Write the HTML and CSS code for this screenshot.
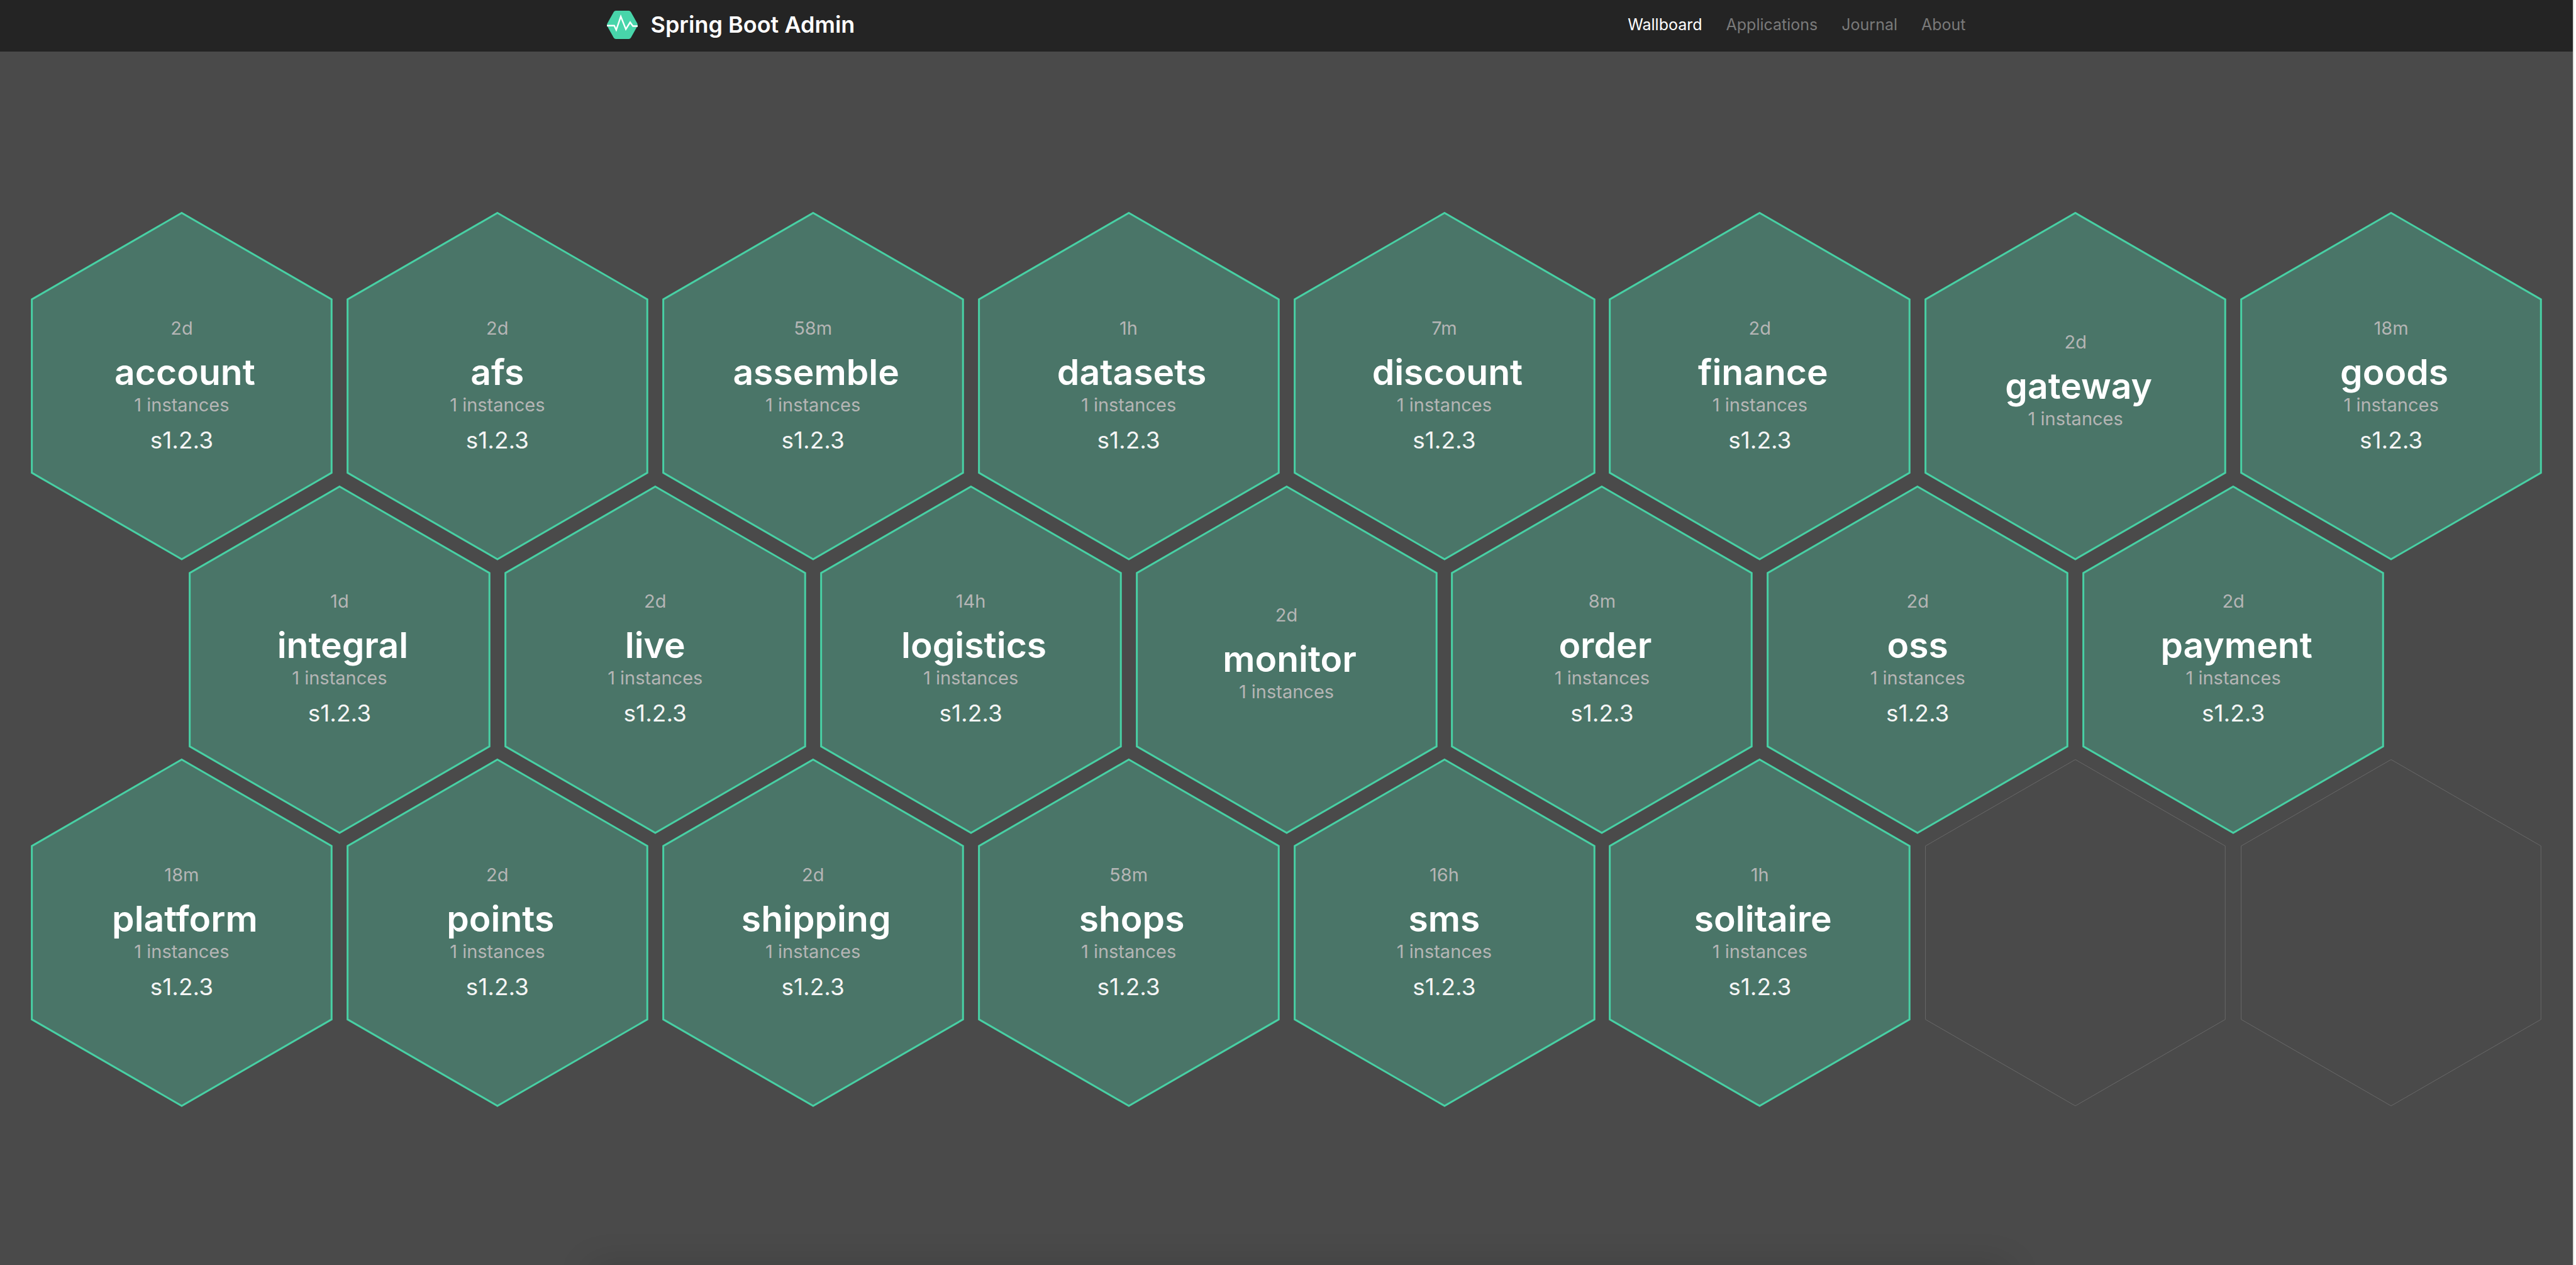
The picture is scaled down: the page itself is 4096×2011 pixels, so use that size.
FILE: index.html
```html
<!DOCTYPE html>
<html lang="en">
<head>
<meta charset="utf-8">
<title>Spring Boot Admin</title>
<link rel="stylesheet" href="styles.css">
</head>
<body>
<div class="app">
  <header class="navbar">
    <div class="navbar-inner">
      <a class="brand" href="#">
        <svg class="brand-logo" viewBox="0 0 61 56" aria-hidden="true">
          <path class="logo-shape" d="M18 0H43Q46 0 47.500 2.500L60 25Q61.500 28 60 31L47.500 53.500Q46 56 43 56H18Q15 56 13.500 53.500L1 31Q-0.500 28 1 25L13.500 2.500Q15 0 18 0Z"/>
          <path class="logo-pulse" d="M0 29.500H14.500L18.500 38L27.500 11.500L37.500 36.500L46 23L51.500 30.500H61"/>
        </svg>
        <span>Spring Boot Admin</span>
      </a>
      <nav class="menu">
        <a class="menu-link is-active" href="#">Wallboard</a>
        <a class="menu-link" href="#">Applications</a>
        <a class="menu-link" href="#">Journal</a>
        <a class="menu-link" href="#">About</a>
      </nav>
    </div>
  </header>
  <main class="wallboard" id="wallboard"></main>
</div>
<script src="wallboard.js"></script>
</body>
</html>
```
FILE: styles.css
```css
* {
  box-sizing: border-box;
}

body {
  margin: 0;
  background: #fff;
  font-family: Inter, "Liberation Sans", sans-serif;
}

.app {
  position: relative;
  display: flex;
  flex-direction: column;
  min-height: 100vh;
  margin-right: 3px;
  border-right: 2px solid #e6e4e2;
  background: #4a4a4a;
  overflow: hidden;
}

/* soft shadow rising from the bottom edge */
.app::after {
  content: "";
  position: absolute;
  top: 100%;
  right: 22%;
  left: 23%;
  height: 40px;
  box-shadow: 0 4px 56px rgba(0, 0, 0, 0.17);
}

.navbar {
  background: #242424;
}

.navbar-inner {
  display: flex;
  align-items: center;
  justify-content: space-between;
  width: 52.8%;
  height: 82px;
  margin: 0 auto;
}

.brand {
  display: flex;
  align-items: center;
  gap: 20px;
  padding-bottom: 4px;
  color: #fff;
  font-size: 36px;
  font-weight: 600;
  line-height: 48px;
  text-decoration: none;
}

.brand-logo {
  width: 49px;
  height: 45px;
}

.logo-shape {
  fill: #48d5aa;
}

.logo-pulse {
  fill: none;
  stroke: #fff;
  stroke-width: 3;
}

.menu {
  display: flex;
  gap: 38px;
  padding-bottom: 4px;
}

.menu-link {
  color: #7a7a7a;
  font-size: 25px;
  line-height: 32px;
  text-decoration: none;
}

.menu-link.is-active {
  color: #fff;
}

.wallboard {
  display: flex;
  flex: 1;
  flex-direction: column;
  justify-content: center;
  padding: 4px 38px 0;
}

.hex-row {
  display: flex;
}

/* rows interlock by a quarter of a cell's height */
.hex-row + .hex-row {
  margin-top: calc(100% / 8 * -0.288675);
}

.hex-row.is-offset {
  justify-content: center;
}

.hex {
  display: grid;
  flex: 0 0 12.5%;
  aspect-ratio: 0.866025;
  color: #fff;
  text-align: center;
  text-decoration: none;
}

.hex > * {
  grid-area: 1 / 1;
}

.hex-shape {
  width: 100%;
  height: 100%;
  fill: #4a7568;
  stroke: #48d0a4;
  stroke-width: 3;
}

.hex.is-empty .hex-shape {
  fill: none;
  stroke: #686868;
  stroke-width: 1;
}

.hex-body {
  display: flex;
  flex-direction: column;
  align-self: center;
}

.hex-time,
.hex-instances {
  margin-bottom: 18px;
  color: #b5b5b5;
  font-size: 29px;
  line-height: 32px;
}

.hex-name {
  font-size: 57px;
  font-weight: 600;
  line-height: 72px;
}

.hex-name.is-long {
  padding-left: 10px;
}

.hex-version {
  color: #f5f5f5;
  font-size: 37px;
  line-height: 44px;
}
```
FILE: wallboard.js
```js
const rows = [
  [["2d", "account"], ["2d", "afs"], ["58m", "assemble"], ["1h", "datasets"],
   ["7m", "discount"], ["2d", "finance"], ["2d", "gateway", false], ["18m", "goods"]],
  [["1d", "integral"], ["2d", "live"], ["14h", "logistics"], ["2d", "monitor", false],
   ["8m", "order"], ["2d", "oss"], ["2d", "payment"]],
  [["18m", "platform"], ["2d", "points"], ["2d", "shipping"], ["58m", "shops"],
   ["16h", "sms"], ["1h", "solitaire"], null, null],
];

const shape = `<svg class="hex-shape" viewBox="0 0 502 580" aria-hidden="true">
  <polygon points="251,14.500 489.500,152 489.500,428 251,565.500 12.500,428 12.500,152"/></svg>`;

function hex(app) {
  if (!app) return `<div class="hex is-empty">${shape}</div>`;
  const [time, name, versioned = true] = app;
  return `<a class="hex" href="#">${shape}
    <span class="hex-body">
      <span class="hex-time">${time}</span>
      <span class="hex-name${name.length > 4 ? " is-long" : ""}">${name}</span>
      <span class="hex-instances">1 instances</span>
      ${versioned ? '<span class="hex-version">s1.2.3</span>' : ""}
    </span></a>`;
}

document.getElementById("wallboard").innerHTML = rows
  .map((row) => `<div class="hex-row${row.length < 8 ? " is-offset" : ""}">${row.map(hex).join("")}</div>`)
  .join("");
```
